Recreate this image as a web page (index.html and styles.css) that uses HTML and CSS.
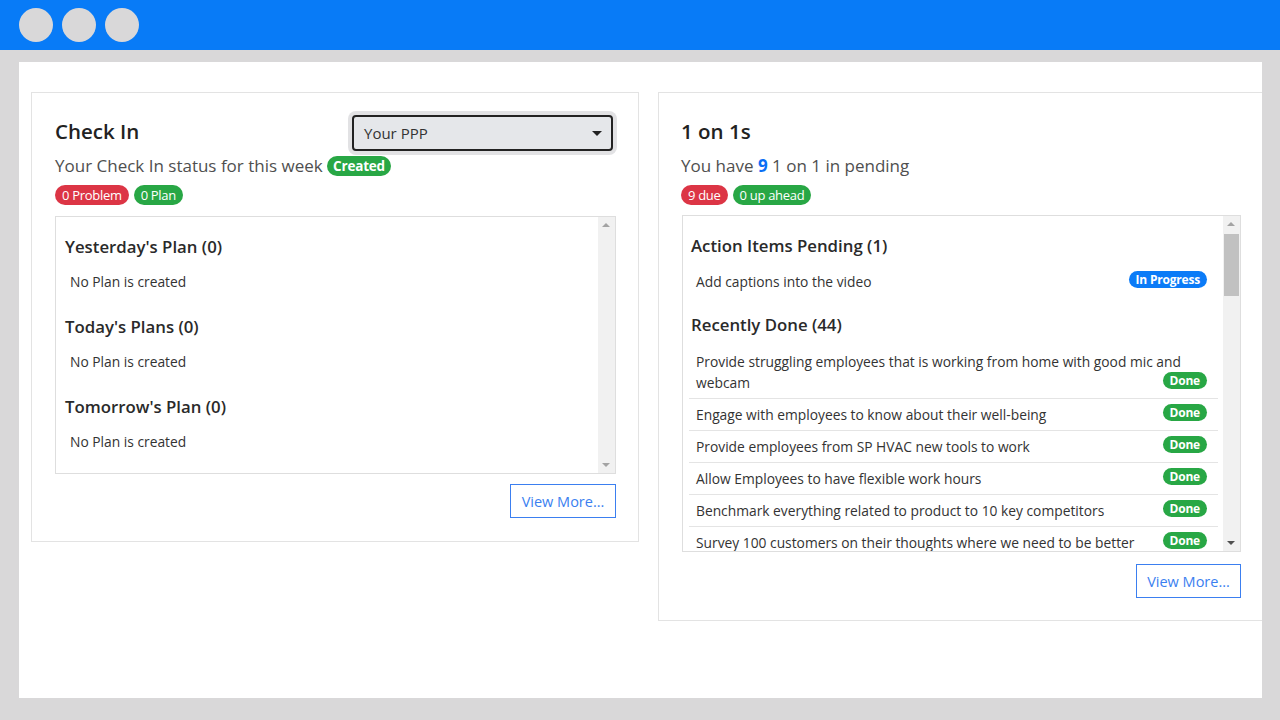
FILE: index.html
```html
<!DOCTYPE html>
<html lang="en">
<head>
<meta charset="utf-8">
<title>Dashboard</title>
<link rel="stylesheet" href="styles.css">
</head>
<body>
<header class="topbar">
  <span class="dot"></span><span class="dot"></span><span class="dot"></span>
</header>
<main class="frame">
  <div class="cards">
    <section class="card card-left">
      <div class="card-head">
        <h2 class="title">Check In</h2>
        <div class="select"><span>Your PPP</span><span class="caret"></span></div>
      </div>
      <p class="status">Your Check In status for this week <span class="badge green">Created</span></p>
      <div class="pills"><span class="pill red">0 Problem</span><span class="pill green">0 Plan</span></div>
      <div class="scrollbox box-left">
        <div class="scroll-content plans">
          <h3 class="sec-title">Yesterday's Plan (0)</h3>
          <p class="empty">No Plan is created</p>
          <h3 class="sec-title">Today's Plans (0)</h3>
          <p class="empty">No Plan is created</p>
          <h3 class="sec-title">Tomorrow's Plan (0)</h3>
          <p class="empty">No Plan is created</p>
        </div>
        <div class="scrollbar">
          <span class="arrow up"></span>
          <span class="track"></span>
          <span class="arrow down"></span>
        </div>
      </div>
      <div class="actions"><button class="view-more">View More...</button></div>
    </section>

    <section class="card card-right">
      <div class="card-head">
        <h2 class="title">1 on 1s</h2>
      </div>
      <p class="status">You have <b class="num">9</b> 1 on 1 in pending</p>
      <div class="pills"><span class="pill red">9 due</span><span class="pill green">0 up ahead</span></div>
      <div class="scrollbox box-right">
        <div class="scroll-content items">
          <h3 class="sec-title first">Action Items Pending (1)</h3>
          <div class="row plain">Add captions into the video<span class="badge blue">In Progress</span></div>
          <h3 class="sec-title second">Recently Done (44)</h3>
          <div class="row">Provide struggling employees that is working from home with good mic and webcam<span class="badge green">Done</span></div>
          <div class="row">Engage with employees to know about their well-being<span class="badge green">Done</span></div>
          <div class="row">Provide employees from SP HVAC new tools to work<span class="badge green">Done</span></div>
          <div class="row">Allow Employees to have flexible work hours<span class="badge green">Done</span></div>
          <div class="row">Benchmark everything related to product to 10 key competitors<span class="badge green">Done</span></div>
          <div class="row">Survey 100 customers on their thoughts where we need to be better<span class="badge green">Done</span></div>
        </div>
        <div class="scrollbar">
          <span class="arrow up"></span>
          <span class="track"><span class="thumb"></span></span>
          <span class="arrow down dark"></span>
        </div>
      </div>
      <div class="actions"><button class="view-more">View More...</button></div>
    </section>
  </div>
</main>
</body>
</html>
```
FILE: styles.css
```css
* { box-sizing: border-box; }

html, body {
  margin: 0;
  padding: 0;
}

body {
  width: 1280px;
  height: 720px;
  overflow: hidden;
  background: #d9d8d9;
  font-family: "Open Sans", "Noto Sans", sans-serif;
  color: #212529;
}

.topbar {
  height: 50px;
  background: #087bf7;
  display: flex;
  align-items: center;
  gap: 9px;
  padding-left: 19px;
}

.dot {
  width: 34px;
  height: 34px;
  border-radius: 50%;
  background: #d9d8d9;
}

.frame {
  display: block;
  margin: 12px 0 0 19px;
  width: 1243px;
  height: 636px;
  background: #ffffff;
  overflow: hidden;
  padding: 30px 0 0 12px;
}

.cards {
  display: flex;
  align-items: flex-start;
  gap: 19px;
}

.card {
  flex: 0 0 608px;
  width: 608px;
  border: 1px solid #e3e3e3;
  background: #fff;
}

.card-left { padding: 23px 22px 23px 23px; }
.card-right { padding: 23px 24px 22px 22px; }

.card-head {
  display: flex;
  justify-content: space-between;
  align-items: flex-start;
  min-height: 35px;
}

.title {
  margin: 0;
  font-size: 20.5px;
  line-height: 30px;
  font-weight: 600;
  color: #222;
}

.select {
  width: 261px;
  height: 36px;
  margin: -1px 3px 0 0;
  background: #e5e7ea;
  border: 2px solid #222;
  border-radius: 4px;
  box-shadow: 0 0 0 4px #e2e2e4;
  display: flex;
  align-items: center;
  justify-content: space-between;
  padding: 0 9px 0 10px;
  font-size: 15px;
  color: #333;
}

.caret {
  width: 0;
  height: 0;
  border-left: 5px solid transparent;
  border-right: 5px solid transparent;
  border-top: 5px solid #222;
}

.status {
  margin: 3px 0 0;
  font-size: 17px;
  line-height: 24px;
  color: #4f4f4f;
}

.num { color: #0b6ff5; font-weight: 700; }

.badge {
  display: inline-block;
  height: 18px;
  line-height: 18px;
  padding: 0 7px;
  border-radius: 9px;
  font-size: 12px;
  font-weight: 700;
  color: #fff;
  vertical-align: 2px;
  letter-spacing: -0.2px;
}

.status .badge {
  height: 20px;
  line-height: 20px;
  border-radius: 10px;
  font-size: 13.5px;
  padding: 0 6px;
  vertical-align: 1px;
}

.green { background: #28a745; }
.red { background: #dc3545; }
.blue { background: #0b7bf7; }

.pills {
  margin-top: 7px;
  display: flex;
  gap: 5px;
  height: 20px;
}

.pill {
  height: 20px;
  line-height: 20px;
  padding: 0 7px;
  border-radius: 10px;
  font-size: 13px;
  color: #fff;
  letter-spacing: -0.3px;
}

.scrollbox {
  margin-top: 11px;
  border: 1px solid #dedede;
  display: flex;
  overflow: hidden;
}

.box-left { height: 258px; }
.box-right { height: 337px; margin-left: 1px; margin-top: 10px; }

.scroll-content {
  flex: 1;
  min-width: 0;
  overflow: hidden;
}

.plans { padding: 18px 0 0 9px; }

.sec-title {
  margin: 0;
  font-size: 16.8px;
  line-height: 24px;
  font-weight: 600;
  color: #2a2a2a;
}

.empty {
  margin: 13px 0 23px 5px;
  font-size: 13.8px;
  line-height: 20px;
  color: #333;
}

.scrollbar {
  flex: 0 0 17px;
  width: 17px;
  background: #f1f1f1;
  display: flex;
  flex-direction: column;
  align-items: center;
}

.arrow {
  flex: 0 0 17px;
  height: 17px;
  width: 17px;
  position: relative;
}

.arrow::after {
  content: "";
  position: absolute;
  left: 4px;
  width: 0;
  height: 0;
  border-left: 4px solid transparent;
  border-right: 4px solid transparent;
}

.arrow.up::after { top: 6px; border-bottom: 4px solid #a3a3a3; }
.arrow.down::after { top: 7px; border-top: 4px solid #a3a3a3; }
.arrow.down.dark::after { border-top-color: #505050; }

.track {
  flex: 1;
  width: 17px;
  display: flex;
  justify-content: center;
}

.thumb {
  margin-top: 1px;
  width: 15px;
  height: 62px;
  background: #c1c1c1;
}

.items { padding: 18px 5px 0 6px; }

.items .sec-title { padding-left: 2px; }

.items .sec-title.second { margin-top: 16px; margin-bottom: 9px; }

.row {
  padding: 5px 11px 5px 7px;
  font-size: 13.8px;
  line-height: 21px;
  color: #333;
  border-bottom: 1px solid #e4e4e4;
}

.row .badge {
  float: right;
  margin-top: 0;
  vertical-align: 0;
  height: 17px;
  line-height: 17px;
  border-radius: 9px;
}

.row.plain {
  border-bottom: none;
  margin-top: 8px;
}

.actions {
  display: flex;
  justify-content: flex-end;
  margin-top: 10px;
}

.card-right .actions { margin-top: 12px; }

.view-more {
  width: 106px;
  height: 34px;
  border: 1px solid #3b7ff0;
  background: #fff;
  color: #3b7ff0;
  font-family: "Open Sans", "Noto Sans", sans-serif;
  font-size: 14.5px;
  padding: 0;
  border-radius: 0;
}

.card-right .view-more { width: 105px; }
```
